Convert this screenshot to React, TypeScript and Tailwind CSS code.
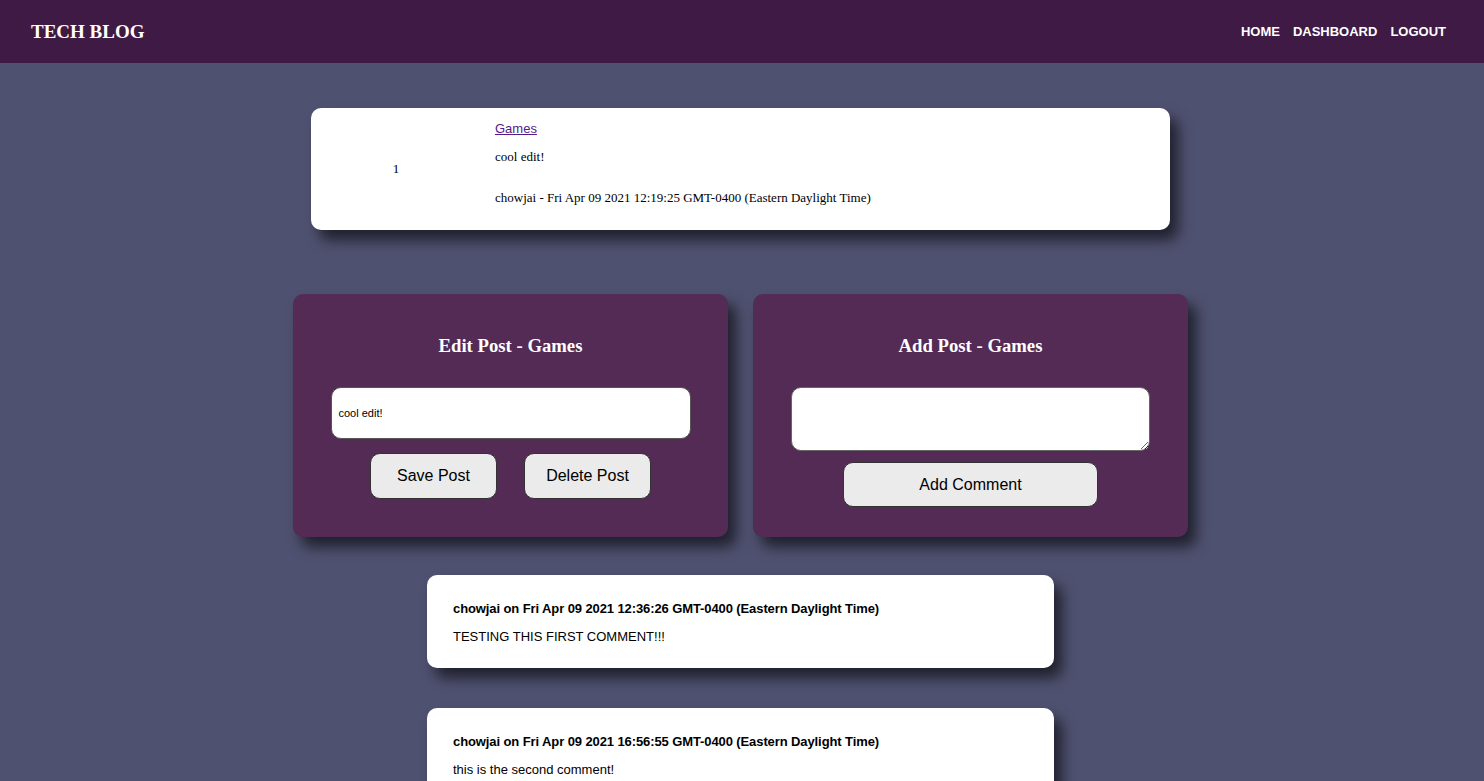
import React from "react";

const serif = "font-['Liberation_Serif',serif]";
const sans = "font-['Liberation_Sans',Arial,sans-serif]";

const comments = [
  {
    author: "chowjai",
    date: "Fri Apr 09 2021 12:36:26 GMT-0400 (Eastern Daylight Time)",
    text: "TESTING THIS FIRST COMMENT!!!",
  },
  {
    author: "chowjai",
    date: "Fri Apr 09 2021 16:56:55 GMT-0400 (Eastern Daylight Time)",
    text: "this is the second comment!",
  },
];

const Header = () => (
  <header className="flex h-[63px] items-center justify-between bg-[#3f1a44] pl-[31px] pr-[38px] text-white">
    <h1 className={`${serif} text-[19px] font-bold leading-none`}>TECH BLOG</h1>
    <nav className={`${sans} flex gap-[13px] text-[13px] font-bold`}>
      <a href="#">HOME</a>
      <a href="#">DASHBOARD</a>
      <a href="#">LOGOUT</a>
    </nav>
  </header>
);

const PostCard = () => (
  <div className="flex h-[122px] w-[859px] items-center rounded-[10px] bg-white shadow-[8px_10px_14px_rgba(0,0,0,0.6)]">
    <div className={`${serif} w-[170px] text-center text-[13px] text-black`}>1</div>
    <div className="ml-[14px] flex flex-col pb-[12px]">
      <a href="#" className={`${sans} text-[13px] leading-[15px] text-[#551a8b] underline`}>
        Games
      </a>
      <p className={`${serif} mt-[13px] text-[13px] leading-[15px] text-black`}>cool edit!</p>
      <p className={`${serif} mt-[26px] text-[13px] leading-[15px] text-black`}>
        chowjai - Fri Apr 09 2021 12:19:25 GMT-0400 (Eastern Daylight Time)
      </p>
    </div>
  </div>
);

const Button = ({ label, width }: { label: string; width: string }) => (
  <button
    className={`${sans} ${width} rounded-[10px] border border-[#333] bg-[#ebebeb] text-[16px] text-black`}
  >
    {label}
  </button>
);

const EditCard = () => (
  <div className="flex h-[243px] w-[435px] flex-col items-center rounded-[10px] bg-[#532b55] pt-[41px] shadow-[8px_10px_14px_rgba(0,0,0,0.6)]">
    <h3 className={`${serif} text-[18.72px] font-bold leading-[22px] text-white`}>Edit Post - Games</h3>
    <div
      className={`${sans} mt-[30px] flex h-[52px] w-[360px] items-center rounded-[10px] border border-[#555] bg-white px-[7px] text-[11px] text-black`}
    >
      cool edit!
    </div>
    <div className="mt-[14px] flex gap-[27px]">
      <Button label="Save Post" width="w-[127px] h-[46px]" />
      <Button label="Delete Post" width="w-[127px] h-[46px]" />
    </div>
  </div>
);

const AddCard = () => (
  <div className="flex h-[243px] w-[435px] flex-col items-center rounded-[10px] bg-[#532b55] pt-[41px] shadow-[8px_10px_14px_rgba(0,0,0,0.6)]">
    <h3 className={`${serif} text-[18.72px] font-bold leading-[22px] text-white`}>Add Post - Games</h3>
    <textarea className="mt-[30px] h-[64px] w-[359px] rounded-[10px] border border-[#666] bg-white" />
    <div className="mt-[11px] flex">
      <Button label="Add Comment" width="w-[255px] h-[45px]" />
    </div>
  </div>
);

const CommentCard = ({ author, date, text }: { author: string; date: string; text: string }) => (
  <div className={`${sans} h-[93px] w-[627px] rounded-[10px] bg-white px-[26px] pt-[26px] text-[13px] text-black shadow-[8px_10px_14px_rgba(0,0,0,0.6)]`}>
    <p className="font-bold leading-[15px] tracking-[-0.1px]">
      {author} on {date}
    </p>
    <p className="mt-[13px] leading-[15px]">{text}</p>
  </div>
);

export default function App() {
  return (
    <div className="min-h-screen bg-[#4f5170]">
      <Header />
      <main className="flex flex-col items-center pb-10 pr-[3px] pt-[45px]">
        <PostCard />
        <div className="mt-[64px] flex gap-[25px]">
          <EditCard />
          <AddCard />
        </div>
        <div className="mt-[38px] flex flex-col gap-[40px]">
          {comments.map((c) => (
            <CommentCard key={c.date} {...c} />
          ))}
        </div>
      </main>
    </div>
  );
}
